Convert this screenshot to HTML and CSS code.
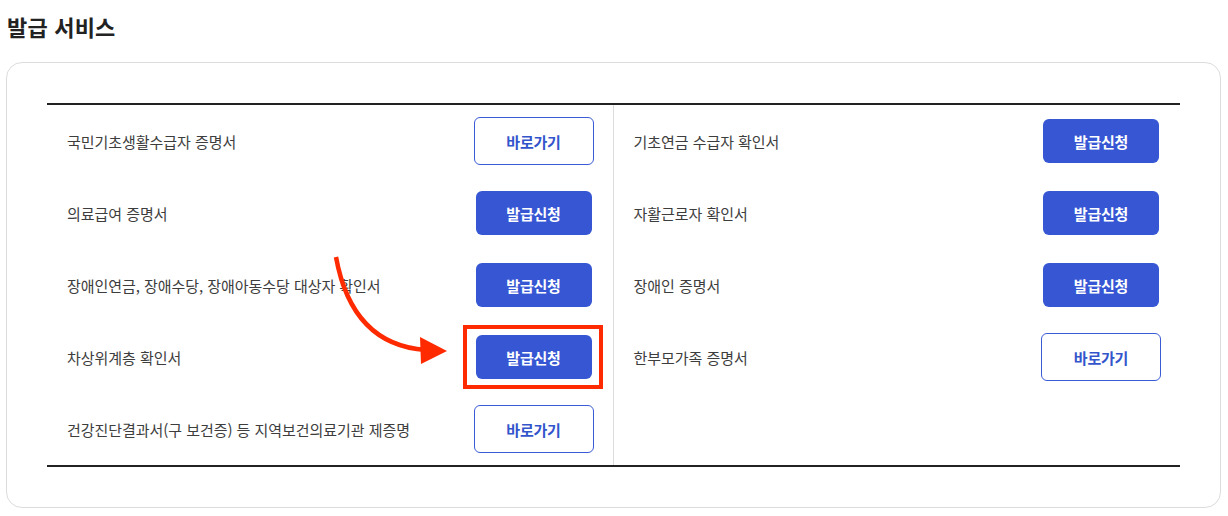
FILE: index.html
```html
<!DOCTYPE html>
<html lang="ko">
<head>
    <meta charset="UTF-8">
    <meta name="viewport" content="width=device-width, initial-scale=1.0">
    <title>발급 서비스</title>
    <link rel="stylesheet" href="styles.css">
</head>
<body>
    <h2 class="page-title">발급 서비스</h2>

    <div class="card">
        <div class="service-table">
            <!-- 왼쪽 목록 -->
            <ul class="service-col left">
                <li class="service-row">
                    <span class="service-name">국민기초생활수급자 증명서</span>
                    <button type="button" class="btn btn-line">바로가기</button>
                </li>
                <li class="service-row">
                    <span class="service-name">의료급여 증명서</span>
                    <button type="button" class="btn btn-fill">발급신청</button>
                </li>
                <li class="service-row">
                    <span class="service-name">장애인연금, 장애수당, 장애아동수당 대상자 확인서</span>
                    <button type="button" class="btn btn-fill">발급신청</button>
                </li>
                <li class="service-row">
                    <span class="service-name">차상위계층 확인서</span>
                    <button type="button" class="btn btn-fill">발급신청</button>
                </li>
                <li class="service-row">
                    <span class="service-name">건강진단결과서(구 보건증) 등 지역보건의료기관 제증명</span>
                    <button type="button" class="btn btn-line">바로가기</button>
                </li>
            </ul>

            <!-- 오른쪽 목록 -->
            <ul class="service-col">
                <li class="service-row">
                    <span class="service-name">기초연금 수급자 확인서</span>
                    <button type="button" class="btn btn-fill">발급신청</button>
                </li>
                <li class="service-row">
                    <span class="service-name">자활근로자 확인서</span>
                    <button type="button" class="btn btn-fill">발급신청</button>
                </li>
                <li class="service-row">
                    <span class="service-name">장애인 증명서</span>
                    <button type="button" class="btn btn-fill">발급신청</button>
                </li>
                <li class="service-row">
                    <span class="service-name">한부모가족 증명서</span>
                    <button type="button" class="btn btn-line">바로가기</button>
                </li>
            </ul>
        </div>
    </div>

    <!-- 안내용 화살표와 강조 박스 -->
    <svg class="annotation" width="1228" height="516" viewBox="0 0 1228 516">
        <path d="M336 257 Q 352 345 426 350" fill="none" stroke="#ff2a00" stroke-width="4.5"/>
        <polygon points="420,337 447,351 421,364" fill="#ff2a00"/>
        <rect x="465" y="327" width="136" height="60" fill="none" stroke="#ff2a00" stroke-width="4"/>
    </svg>
</body>
</html>
```

FILE: styles.css
```css
body {
    margin: 0;
    padding: 0 7px 0 6px;
    font-family: "Noto Sans CJK KR", "Noto Sans", sans-serif;
    color: #444;
    background-color: #fff;
    position: relative;
}
.page-title {
    margin: 10px 0 20px 1px;
    font-size: 22px;
    line-height: 32px;
    font-weight: 700;
    color: #222;
    letter-spacing: 0.2px;
}
.card {
    border: 1px solid #dcdcdc;
    border-radius: 16px;
    padding: 40px;
}
.service-table {
    display: grid;
    grid-template-columns: 1fr 1fr;
    border-top: 2px solid #222;
    border-bottom: 2px solid #222;
}
.service-col {
    list-style: none;
    margin: 0;
    padding: 0;
}
.service-col.left {
    border-right: 1px solid #ddd;
}
.service-row {
    display: flex;
    align-items: center;
    justify-content: space-between;
    height: 72px;
    padding: 0 19px 0 20px;
}
.service-name {
    font-size: 15px;
    letter-spacing: -0.05px;
    color: #3d3d3d;
}
.btn {
    font-family: inherit;
    font-size: 15px;
    font-weight: 700;
    letter-spacing: -0.2px;
    cursor: pointer;
    border-radius: 6px;
}
.btn-line {
    width: 120px;
    height: 48px;
    background-color: #fff;
    color: #3355cc;
    border: 1px solid #3a5bd6;
}
.btn-fill {
    width: 116px;
    height: 44px;
    margin-right: 2px;
    background-color: #3656d4;
    color: #fff;
    border: none;
}
.btn-fill:hover {
    background-color: #2946bb;
}

/* 화살표 표시 */
.annotation {
    position: absolute;
    left: 0;
    top: 0;
    pointer-events: none;
}
```
